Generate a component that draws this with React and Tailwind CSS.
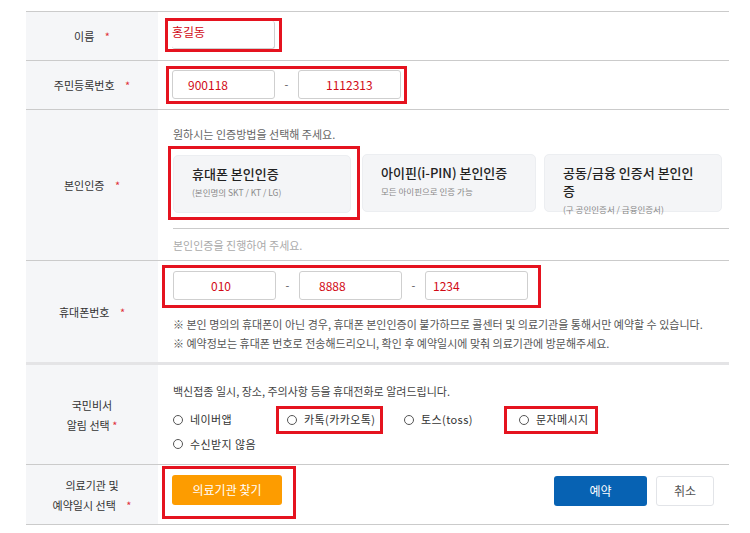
import React from 'react'

const FONT = { fontFamily: '"Noto Sans CJK KR", "Noto Sans", sans-serif' }

function Label({ children }) {
  return (
    <div className="w-[132px] shrink-0 bg-[#f5f6f8] flex items-center justify-center text-center text-[11px] leading-[20px] text-[#333]">
      <div>{children}</div>
    </div>
  )
}

function Star() {
  return <span className="text-[#e0303a] ml-[8px]">*</span>
}

function Field({ value, pad = 'pl-[15px]' }) {
  return (
    <div className={`w-[103px] h-[29px] border border-[#cfcfcf] rounded-[3px] bg-white flex items-center text-[12px] text-[#d10a16] ${pad}`}>
      {value}
    </div>
  )
}

function Dash() {
  return <span className="w-[23px] text-center text-[11px] text-[#555]">-</span>
}

function Radio({ label }) {
  return (
    <span className="flex items-center gap-[7px] whitespace-nowrap text-[11px] text-[#333] tracking-[0.4px]">
      <span className="w-[10px] h-[10px] shrink-0 rounded-full border border-[#555] bg-white"></span>
      {label}
    </span>
  )
}

function Card({ title, sub, width = 'w-[178px]', pr = 'pr-[14px]' }) {
  return (
    <div className={`${width} ${pr} h-[58px] shrink-0 rounded-[5px] bg-[#f4f5f7] border border-[#eceef1] pl-[18px] pt-[9px]`}>
      <div className="text-[13px] font-medium leading-[18px] text-[#222]">{title}</div>
      <div className="text-[8.5px] leading-[12px] mt-[3px] text-[#888] whitespace-nowrap">{sub}</div>
    </div>
  )
}

export default function App() {
  return (
    <div className="w-[750px] h-[533px] bg-white pt-[11px]" style={FONT}>
      <div className="ml-[26px] w-[703px] border-t border-[#cbcbcb]">
        {/* 이름 */}
        <div className="flex h-[49px] border-b border-[#cbcbcb]">
          <Label>이름 <Star /></Label>
          <div className="flex-1 pl-[7px] pt-[6px]">
            <div className="inline-flex border-[3px] border-[#e5131f] pl-[4px] pr-[4px]">
              <div className="w-[103px] h-[28px] border-r border-b border-[#cfcfcf] rounded-[3px] bg-white text-[12px] text-[#d10a16] leading-[22px]">홍길동</div>
            </div>
          </div>
        </div>

        {/* 주민등록번호 */}
        <div className="flex h-[49px] border-b border-[#cbcbcb]">
          <Label>주민등록번호 <Star /></Label>
          <div className="flex-1 pl-[8px] pt-[5px]">
            <div className="inline-flex items-center border-[3px] border-[#e5131f] px-[3px] pt-[1px] pb-[2px]">
              <Field value="900118" pad="pl-[15px]" />
              <Dash />
              <Field value="1112313" pad="pl-[27px]" />
            </div>
          </div>
        </div>

        {/* 본인인증 */}
        <div className="flex h-[151px] border-b border-[#cbcbcb]">
          <Label>본인인증 <Star /></Label>
          <div className="flex-1 pl-[15px] pt-[17px]">
            <div className="text-[11px] leading-[14px] text-[#666]">원하시는 인증방법을 선택해 주세요.</div>
            <div className="flex items-center mt-[5px] -ml-[5px]">
              <div className="border-[3px] border-[#e5131f] pl-[2px] pr-[6px] pt-[6px] pb-[4px]">
                <Card title="휴대폰 본인인증" sub="(본인명의 SKT / KT / LG)" />
              </div>
              <div className="ml-[2px]">
                <Card title="아이핀(i-PIN) 본인인증" sub="모든 아이핀으로 인증 가능" width="w-[174px]" />
              </div>
              <div className="ml-[8px]">
                <Card title="공동/금융 인증서 본인인증" sub="(구 공인인증서 / 금융인증서)" pr="pr-[26px]" />
              </div>
            </div>
            <div className="border-t border-[#cbcbcb] mt-[8px] pt-[9px] text-[11px] leading-[14px] text-[#aaa]">
              본인인증을 진행하여 주세요.
            </div>
          </div>
        </div>

        {/* 휴대폰번호 */}
        <div className="flex h-[104px] border-b-[3px] border-[#e4e4e6]">
          <Label>휴대폰번호 <Star /></Label>
          <div className="flex-1 pl-[4px] pt-[4px]">
            <div className="inline-flex items-center border-[3px] border-[#e5131f] pl-[8px] pr-[10px] pt-[3px] pb-[5px]">
              <Field value="010" pad="pl-[37px]" />
              <Dash />
              <Field value="8888" pad="pl-[19px]" />
              <Dash />
              <Field value="1234" pad="pl-[7px]" />
            </div>
            <div className="pl-[11px] mt-[7px] text-[11px] leading-[19px] text-[#555]">
              <div>※ 본인 명의의 휴대폰이 아닌 경우, 휴대폰 본인인증이 불가하므로 콜센터 및 의료기관을 통해서만 예약할 수 있습니다.</div>
              <div>※ 예약정보는 휴대폰 번호로 전송해드리오니, 확인 후 예약일시에 맞춰 의료기관에 방문해주세요.</div>
            </div>
          </div>
        </div>

        {/* 국민비서 */}
        <div className="flex h-[100px] border-b border-[#cbcbcb]">
          <Label>국민비서<br />알림 선택 <span className="text-[#e0303a]">*</span></Label>
          <div className="flex-1 pl-[15px] pt-[19px]">
            <div className="text-[11px] leading-[14px] text-[#444]">백신접종 일시, 장소, 주의사항 등을 휴대전화로 알려드립니다.</div>
            <div className="flex items-center mt-[7px] h-[29px]">
              <div className="w-[103px]"><Radio label="네이버앱" /></div>
              <div className="border-[3px] border-[#e5131f] h-[28px] flex items-center pl-[8px] w-[107px] shrink-0">
                <Radio label="카톡(카카오톡)" />
              </div>
              <div className="w-[121px] pl-[21px] shrink-0"><Radio label="토스(toss)" /></div>
              <div className="border-[3px] border-[#e5131f] h-[28px] flex items-center pl-[12px] w-[94px] shrink-0">
                <Radio label="문자메시지" />
              </div>
            </div>
            <div className="mt-[2px]"><Radio label="수신받지 않음" /></div>
          </div>
        </div>

        {/* 의료기관 */}
        <div className="flex h-[60px] border-b border-[#cbcbcb]">
          <Label>의료기관 및<br />예약일시 선택 <Star /></Label>
          <div className="flex-1 flex items-start pt-[1px] pr-[15px]">
            <div className="ml-[4px] border-[3px] border-[#e5131f] pl-[7px] pr-[11px] pt-[6px] pb-[11px]">
              <button className="w-[110px] h-[30px] rounded-[3px] bg-[#fd9c00] text-white text-[12px]">의료기관 찾기</button>
            </div>
            <div className="ml-auto flex gap-[9px] pt-[10px]">
              <button className="w-[93px] h-[30px] rounded-[3px] bg-[#0762b3] text-white text-[12px]">예약</button>
              <button className="w-[58px] h-[30px] rounded-[3px] bg-white border border-[#e2e4e8] text-[#555] text-[12px]">취소</button>
            </div>
          </div>
        </div>
      </div>
    </div>
  )
}
